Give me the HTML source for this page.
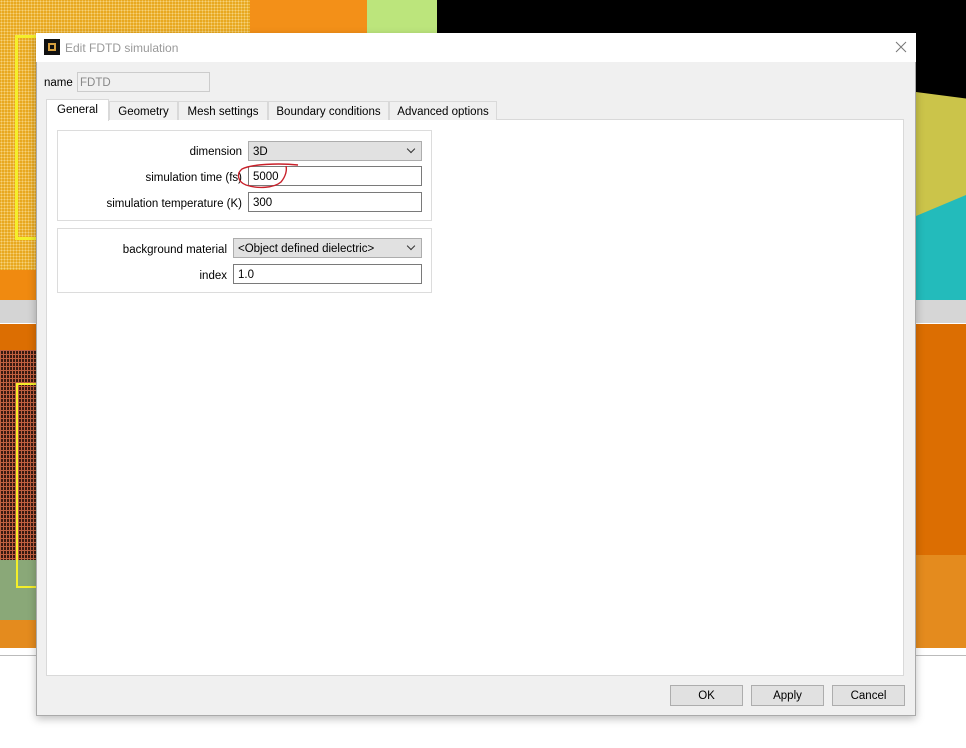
<!DOCTYPE html>
<html><head><style>
*{margin:0;padding:0;box-sizing:border-box}
body{width:966px;height:748px;position:relative;overflow:hidden;background:#fff;font-family:"Liberation Sans",sans-serif;font-size:12px;color:#000}
.a{position:absolute}
.dots{background-color:#e8a820;background-image:radial-gradient(#f6d27a 0.8px,transparent 1px);background-size:3px 3px}
.mesh{background-color:#3a1a10;background-image:linear-gradient(90deg,#c06040 1px,transparent 1px),linear-gradient(#c06040 1px,transparent 1px);background-size:3px 4px}
.lbl{position:absolute;text-align:right;font-size:11.5px}
.inp{position:absolute;background:#fff;border:1px solid #7a7a7a;height:20px;padding:4px 4px 0;font-size:11.5px}
.cmb{position:absolute;background:#e1e1e1;border:1px solid #adadad;height:20px;padding:4px 4px 0;font-size:11.5px}
.cmb:after{content:"";position:absolute;right:7px;top:4px;width:5px;height:5px;border-right:1px solid #333;border-bottom:1px solid #333;transform:rotate(45deg)}
.tab{position:absolute;top:101px;height:19px;border:1px solid #d9d9d9;border-bottom:none;background:#f0f0f0;font-size:11.5px;padding-top:4px;text-align:center}
.btn{position:absolute;top:685px;width:73px;height:21px;background:#e1e1e1;border:1px solid #adadad;text-align:center;font-size:11.5px;padding-top:4px}
.grp{position:absolute;border:1px solid #dcdcdc;background:#fff}
</style></head><body>
<div class="a dots" style="left:0;top:0;width:250px;height:270px"></div>
<div class="a" style="left:250px;top:0;width:117px;height:33px;background:#f39018"></div>
<div class="a" style="left:367px;top:0;width:70px;height:33px;background:#bce57c"></div>
<div class="a" style="left:437px;top:0;width:529px;height:33px;background:#000"></div>
<div class="a" style="left:916px;top:0;width:50px;height:100px;background:#000"></div>
<div class="a" style="left:916px;top:92px;width:50px;height:130px;background:#cbc44a;clip-path:polygon(0 0,100% 5%,100% 100%,0 100%)"></div>
<div class="a" style="left:916px;top:195px;width:50px;height:105px;background:#23bbbb;clip-path:polygon(0 20%,100% 0,100% 100%,0 100%)"></div>
<div class="a" style="left:916px;top:300px;width:50px;height:23px;background:#d6d6d6"></div>
<div class="a" style="left:916px;top:324px;width:50px;height:231px;background:#dc6e02"></div>
<div class="a" style="left:916px;top:555px;width:50px;height:93px;background:#e48b1e"></div>
<div class="a" style="left:15px;top:35px;width:21px;height:205px;border:3px solid #f5ef2a;border-right:none"></div>
<div class="a" style="left:0;top:270px;width:36px;height:30px;background:#f08a10"></div>
<div class="a" style="left:0;top:300px;width:36px;height:23px;background:#d4d4d4"></div>
<div class="a" style="left:0;top:324px;width:36px;height:26px;background:#dc6e02"></div>
<div class="a mesh" style="left:0;top:350px;width:36px;height:210px"></div>
<div class="a" style="left:0;top:560px;width:36px;height:60px;background:#8aa878"></div>
<div class="a" style="left:16px;top:383px;width:20px;height:205px;border:2px solid #f5ef2a;border-right:none"></div>
<div class="a" style="left:0;top:620px;width:36px;height:28px;background:#e48b1e"></div>
<div class="a" style="left:0;top:655px;width:36px;height:1px;background:#bbb"></div>
<div class="a" style="left:916px;top:655px;width:50px;height:1px;background:#bbb"></div>
<div class="a" style="left:36px;top:33px;width:880px;height:683px;background:#f0f0f0;border:1px solid #aaa;box-shadow:0 3px 8px rgba(0,0,0,.25)"></div>
<div class="a" style="left:36px;top:33px;width:880px;height:29px;background:#fff"></div>
<div class="a" style="left:44px;top:39px;width:16px;height:16px;background:#111"><div class="a" style="left:4px;top:4px;width:8px;height:8px;border:2px solid #d6a040"></div></div>
<div class="a" style="left:65px;top:41px;color:#999;font-size:12px">Edit FDTD simulation</div>
<svg class="a" style="left:895px;top:41px" width="12" height="12"><path d="M1 1L11 11M11 1L1 11" stroke="#777" stroke-width="1"/></svg>
<div class="a" style="left:44px;top:77px;font-size:11.5px">name</div>
<div class="a" style="left:77px;top:72px;width:133px;height:20px;border:1px solid #ccc;background:#f0f0f0;color:#888;font-size:11.5px;padding:4px 2px 0">FDTD</div>
<div class="a" style="left:46px;top:119px;width:858px;height:557px;background:#fff;border:1px solid #d9d9d9"></div>
<div class="tab" style="left:46px;top:99px;width:63px;height:22px;background:#fff;border-color:#d9d9d9">General</div>
<div class="tab" style="left:109px;width:69px">Geometry</div>
<div class="tab" style="left:178px;width:90px">Mesh settings</div>
<div class="tab" style="left:268px;width:121px">Boundary conditions</div>
<div class="tab" style="left:389px;width:108px">Advanced options</div>
<div class="grp" style="left:57px;top:130px;width:375px;height:91px"></div>
<div class="lbl" style="left:60px;width:182px;top:146px">dimension</div>
<div class="cmb" style="left:248px;top:141px;width:174px">3D</div>
<div class="lbl" style="left:60px;width:182px;top:172px">simulation time (fs)</div>
<div class="inp" style="left:248px;top:166px;width:174px">5000</div>
<div class="lbl" style="left:60px;width:182px;top:198px">simulation temperature (K)</div>
<div class="inp" style="left:248px;top:192px;width:174px">300</div>
<svg class="a" style="left:234px;top:160px" width="70" height="34"><path d="M64 5 C45 3 18 4 8 9 C2 14 4 22 12 25 C24 29 40 28 47 22 C52 16 53 10 52 6" fill="none" stroke="#c8202a" stroke-width="1.4"/></svg>
<div class="grp" style="left:57px;top:228px;width:375px;height:65px"></div>
<div class="lbl" style="left:60px;width:167px;top:244px">background material</div>
<div class="cmb" style="left:233px;top:238px;width:189px">&lt;Object defined dielectric&gt;</div>
<div class="lbl" style="left:60px;width:167px;top:270px">index</div>
<div class="inp" style="left:233px;top:264px;width:189px">1.0</div>
<div class="btn" style="left:670px">OK</div>
<div class="btn" style="left:751px">Apply</div>
<div class="btn" style="left:832px">Cancel</div>
</body></html>
